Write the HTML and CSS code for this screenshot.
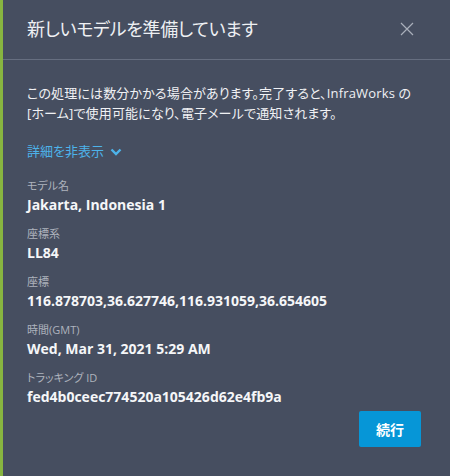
FILE: index.html
```html
<!DOCTYPE html>
<html lang="ja">
<head>
<meta charset="utf-8">
<link rel="stylesheet" href="styles.css">
</head>
<body>
<div class="dialog">
  <div class="header">
    <h1 class="title">新しいモデルを準備しています</h1>
    <svg class="close" width="14" height="14" viewBox="0 0 14 14"><path d="M1 1L13 13M13 1L1 13" stroke="#a9afba" stroke-width="1.2" fill="none"/></svg>
  </div>
  <div class="body">
    <p class="msg">この処理には数分かかる場合があります。完了すると、InfraWorks の<br>[ホーム]で使用可能になり、電子メールで通知されます。</p>
    <div class="toggle">詳細を非表示 <svg class="chev" width="12" height="8" viewBox="0 0 12 8"><path d="M1.5 1.5L6 6L10.5 1.5" stroke="#4db3ea" stroke-width="2.4" fill="none"/></svg></div>
    <dl class="details">
      <dt>モデル名</dt><dd>Jakarta, Indonesia 1</dd>
      <dt>座標系</dt><dd>LL84</dd>
      <dt>座標</dt><dd>116.878703,36.627746,116.931059,36.654605</dd>
      <dt>時間(GMT)</dt><dd>Wed, Mar 31, 2021 5:29 AM</dd>
      <dt>トラッキング ID</dt><dd>fed4b0ceec774520a105426d62e4fb9a</dd>
    </dl>
    <div class="actions"><button class="btn">続行</button></div>
  </div>
</div>
</body>
</html>
```

FILE: styles.css
```css
html, body { margin: 0; padding: 0; }
body {
  width: 450px; height: 476px; overflow: hidden;
  background: #464e60;
  font-family: "Open Sans", "Noto Sans CJK JP", sans-serif;
  font-feature-settings: "palt";
  color: #f2f3f5;
}
.dialog {
  height: 476px;
  border-left: 3px solid #87b540;
  box-sizing: border-box;
  background: #464e60;
}
.header {
  height: 59px;
  border-bottom: 1px solid #666e80;
  display: flex; align-items: center; justify-content: space-between;
  padding: 0 36px 0 24px;
}
.title {
  margin: 0; font-size: 18px; font-weight: 400; color: #eef0f3;
  letter-spacing: -0.3px;
  position: relative; top: -2px;
}
.close { position: relative; top: -1px; }
.body { padding: 23px 24px 0 24px; }
.msg { margin: 0; font-size: 13px; line-height: 20px; color: #f0f1f4; letter-spacing: 0.15px; white-space: nowrap; }
.toggle {
  margin-top: 18px; font-size: 13px; color: #4db3ea; line-height: 20px;
  display: flex; align-items: center; gap: 6px;
}
.chev { position: relative; top: 1px; }
.details { margin: 16px 0 0 0; }
.details dt { font-size: 11px; color: #aeb3bd; line-height: 18px; }
.details dd { margin: 1px 0 11px 0; font-size: 14px; font-weight: 700; line-height: 18px; color: #f5f6f8; }
.details dd:last-child { margin-bottom: 5px; }
.actions { display: flex; justify-content: flex-end; padding-right: 5px; }
.btn {
  width: 62px; height: 36px; border: 0; border-radius: 2px;
  background: #0696d7; color: #fff; font-family: inherit; font-size: 14px; font-weight: 700;
}
```
